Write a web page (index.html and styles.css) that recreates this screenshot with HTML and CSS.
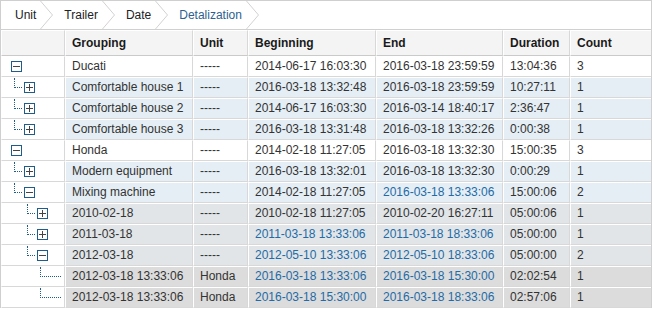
FILE: index.html
```html
<!DOCTYPE html>
<html>
<head>
	<title>Detalization</title>
	<link rel="stylesheet" href="styles.css">
</head>
<body>
	<div class="report">
		<div class="crumbs">
			<span class="crumb">Unit</span>
			<svg class="chev" width="13" height="28"><polyline points="0.5,0 12.5,14 0.5,28" /></svg>
			<span class="crumb">Trailer</span>
			<svg class="chev" width="13" height="28"><polyline points="0.5,0 12.5,14 0.5,28" /></svg>
			<span class="crumb">Date</span>
			<svg class="chev" width="13" height="28"><polyline points="0.5,0 12.5,14 0.5,28" /></svg>
			<span class="crumb crumb_active">Detalization</span>
			<svg class="chev" width="13" height="28"><polyline points="0.5,0 12.5,14 0.5,28" /></svg>
		</div>

		<div class="grid">
			<div class="row head">
				<div class="cell"></div>
				<div class="cell">Grouping</div>
				<div class="cell">Unit</div>
				<div class="cell">Beginning</div>
				<div class="cell">End</div>
				<div class="cell">Duration</div>
				<div class="cell">Count</div>
			</div>

			<!-- Ducati -->
			<div class="row lvl0">
				<div class="cell tree"><span class="pad0"></span><svg class="exp" width="11" height="11"><rect x="0.5" y="0.5" width="10" height="10" /><line x1="2" y1="5.5" x2="9" y2="5.5" /></svg></div>
				<div class="cell">Ducati</div>
				<div class="cell">-----</div>
				<div class="cell">2014-06-17 16:03:30</div>
				<div class="cell">2016-03-18 23:59:59</div>
				<div class="cell">13:04:36</div>
				<div class="cell">3</div>
			</div>
			<div class="row lvl1">
				<div class="cell tree"><span class="pad1"></span><span class="elbow"></span><svg class="exp" width="11" height="11"><rect x="0.5" y="0.5" width="10" height="10" /><line x1="2" y1="5.5" x2="9" y2="5.5" /><line x1="5.5" y1="2" x2="5.5" y2="9" /></svg></div>
				<div class="cell">Comfortable house 1</div>
				<div class="cell">-----</div>
				<div class="cell">2016-03-18 13:32:48</div>
				<div class="cell">2016-03-18 23:59:59</div>
				<div class="cell">10:27:11</div>
				<div class="cell">1</div>
			</div>
			<div class="row lvl1">
				<div class="cell tree"><span class="pad1"></span><span class="elbow"></span><svg class="exp" width="11" height="11"><rect x="0.5" y="0.5" width="10" height="10" /><line x1="2" y1="5.5" x2="9" y2="5.5" /><line x1="5.5" y1="2" x2="5.5" y2="9" /></svg></div>
				<div class="cell">Comfortable house 2</div>
				<div class="cell">-----</div>
				<div class="cell">2014-06-17 16:03:30</div>
				<div class="cell">2016-03-14 18:40:17</div>
				<div class="cell">2:36:47</div>
				<div class="cell">1</div>
			</div>
			<div class="row lvl1">
				<div class="cell tree"><span class="pad1"></span><span class="elbow"></span><svg class="exp" width="11" height="11"><rect x="0.5" y="0.5" width="10" height="10" /><line x1="2" y1="5.5" x2="9" y2="5.5" /><line x1="5.5" y1="2" x2="5.5" y2="9" /></svg></div>
				<div class="cell">Comfortable house 3</div>
				<div class="cell">-----</div>
				<div class="cell">2016-03-18 13:31:48</div>
				<div class="cell">2016-03-18 13:32:26</div>
				<div class="cell">0:00:38</div>
				<div class="cell">1</div>
			</div>

			<!-- Honda -->
			<div class="row lvl0">
				<div class="cell tree"><span class="pad0"></span><svg class="exp" width="11" height="11"><rect x="0.5" y="0.5" width="10" height="10" /><line x1="2" y1="5.5" x2="9" y2="5.5" /></svg></div>
				<div class="cell">Honda</div>
				<div class="cell">-----</div>
				<div class="cell">2014-02-18 11:27:05</div>
				<div class="cell">2016-03-18 13:32:30</div>
				<div class="cell">15:00:35</div>
				<div class="cell">3</div>
			</div>
			<div class="row lvl1">
				<div class="cell tree"><span class="pad1"></span><span class="elbow"></span><svg class="exp" width="11" height="11"><rect x="0.5" y="0.5" width="10" height="10" /><line x1="2" y1="5.5" x2="9" y2="5.5" /><line x1="5.5" y1="2" x2="5.5" y2="9" /></svg></div>
				<div class="cell">Modern equipment</div>
				<div class="cell">-----</div>
				<div class="cell">2016-03-18 13:32:01</div>
				<div class="cell">2016-03-18 13:32:30</div>
				<div class="cell">0:00:29</div>
				<div class="cell">1</div>
			</div>
			<div class="row lvl1">
				<div class="cell tree"><span class="pad1"></span><span class="elbow"></span><svg class="exp" width="11" height="11"><rect x="0.5" y="0.5" width="10" height="10" /><line x1="2" y1="5.5" x2="9" y2="5.5" /></svg></div>
				<div class="cell">Mixing machine</div>
				<div class="cell">-----</div>
				<div class="cell">2014-02-18 11:27:05</div>
				<div class="cell link">2016-03-18 13:33:06</div>
				<div class="cell">15:00:06</div>
				<div class="cell">2</div>
			</div>
			<div class="row lvl2">
				<div class="cell tree"><span class="pad2"></span><span class="elbow"></span><svg class="exp" width="11" height="11"><rect x="0.5" y="0.5" width="10" height="10" /><line x1="2" y1="5.5" x2="9" y2="5.5" /><line x1="5.5" y1="2" x2="5.5" y2="9" /></svg></div>
				<div class="cell">2010-02-18</div>
				<div class="cell">-----</div>
				<div class="cell">2010-02-18 11:27:05</div>
				<div class="cell">2010-02-20 16:27:11</div>
				<div class="cell">05:00:06</div>
				<div class="cell">1</div>
			</div>
			<div class="row lvl2">
				<div class="cell tree"><span class="pad2"></span><span class="elbow"></span><svg class="exp" width="11" height="11"><rect x="0.5" y="0.5" width="10" height="10" /><line x1="2" y1="5.5" x2="9" y2="5.5" /><line x1="5.5" y1="2" x2="5.5" y2="9" /></svg></div>
				<div class="cell">2011-03-18</div>
				<div class="cell">-----</div>
				<div class="cell link">2011-03-18 13:33:06</div>
				<div class="cell link">2011-03-18 18:33:06</div>
				<div class="cell">05:00:00</div>
				<div class="cell">1</div>
			</div>
			<div class="row lvl2">
				<div class="cell tree"><span class="pad2"></span><span class="elbow"></span><svg class="exp" width="11" height="11"><rect x="0.5" y="0.5" width="10" height="10" /><line x1="2" y1="5.5" x2="9" y2="5.5" /></svg></div>
				<div class="cell">2012-03-18</div>
				<div class="cell">-----</div>
				<div class="cell link">2012-05-10 13:33:06</div>
				<div class="cell link">2012-05-10 18:33:06</div>
				<div class="cell">05:00:00</div>
				<div class="cell">2</div>
			</div>
			<div class="row lvl3">
				<div class="cell tree"><span class="pad3"></span><span class="elbow elbow_leaf"></span></div>
				<div class="cell">2012-03-18 13:33:06</div>
				<div class="cell">Honda</div>
				<div class="cell link">2016-03-18 13:33:06</div>
				<div class="cell link">2016-03-18 15:30:00</div>
				<div class="cell">02:02:54</div>
				<div class="cell">1</div>
			</div>
			<div class="row lvl3">
				<div class="cell tree"><span class="pad3"></span><span class="elbow elbow_leaf"></span></div>
				<div class="cell">2012-03-18 13:33:06</div>
				<div class="cell">Honda</div>
				<div class="cell link">2016-03-18 15:30:00</div>
				<div class="cell link">2016-03-18 18:33:06</div>
				<div class="cell">02:57:06</div>
				<div class="cell">1</div>
			</div>
		</div>
	</div>
</body>
</html>
```

FILE: styles.css
```css
* {
	margin: 0;
	padding: 0;
	box-sizing: border-box;
}

body {
	font-family: "Liberation Sans", Arial, sans-serif;
	font-size: 12px;
	color: #333;
	background: #fff;
}

.report {
	width: 652px;
	border: 1px solid #cfcfcf;
	border-bottom: none;
}

/* 面包屑 */
.crumbs {
	height: 29px;
	display: flex;
	align-items: center;
	padding-left: 14px;
	border-bottom: 1px solid #d0d0d0;
}

.crumb {
	color: #222;
	line-height: 28px;
}

.crumb_active {
	color: #2d5f90;
}

.chev {
	margin: 0 11px 0 4px;
	align-self: flex-start;
}

.chev polyline {
	fill: none;
	stroke: #d2d2d2;
	stroke-width: 1;
}

/* 表格 */
.row {
	display: grid;
	grid-template-columns: 64px 128px 55px 128px 127px 67px 81px;
	height: 21px;
}

.cell {
	border-left: 1px solid #fff;
	border-top: 1px solid #fff;
	border-right: 1px solid #d8d8d8;
	border-bottom: 1px solid #d8d8d8;
	padding-left: 6px;
	line-height: 19px;
	white-space: nowrap;
	overflow: hidden;
}

.cell:last-child {
	border-right: none;
}

.head {
	height: 26px;
}

.head .cell {
	background: #f4f4f4;
	color: #1a1a1a;
	font-weight: bold;
	line-height: 24px;
	border-bottom-color: #cacaca;
}

.lvl1 .cell {
	background: #e5eef5;
}

.lvl2 .cell {
	background: #e1e5e8;
}

.lvl3 .cell {
	background: #dcdcdc;
}

.row .tree {
	background: #fff;
	padding-left: 0;
	display: flex;
	align-items: center;
}

.link {
	color: #236ba6;
}

/* 树形线 */
.pad0 { width: 9px; }
.pad1 { width: 12px; }
.pad2 { width: 25px; }
.pad3 { width: 38px; }

.pad0, .pad1, .pad2, .pad3 {
	flex: none;
	align-self: stretch;
}

.elbow {
	flex: none;
	align-self: flex-start;
	width: 8px;
	height: 10px;
	margin-right: 2px;
	border-left: 1px dotted #1e5c8c;
	border-bottom: 1px dotted #1e5c8c;
}

.elbow_leaf {
	width: 21px;
}

.exp {
	flex: none;
	display: block;
}

.exp rect {
	fill: #fff;
	stroke: #1e5c8c;
}

.exp line {
	stroke: #444;
	stroke-width: 1;
}
```
